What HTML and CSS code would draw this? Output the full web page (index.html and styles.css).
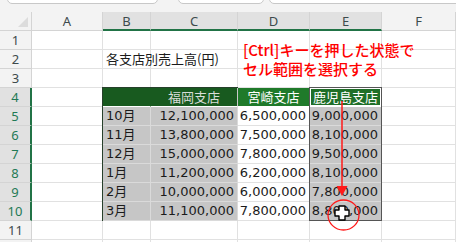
FILE: index.html
```html
<!DOCTYPE html>
<html lang="ja">
<head>
<meta charset="utf-8">
<link rel="stylesheet" href="styles.css">
</head>
<body>
<div class="chrome">
  <div class="box b1"></div>
  <div class="box b2"></div>
  <div class="box b3"></div>
</div>
<div class="sheet">
  <div class="c corner"><span class="tri"></span></div>
  <div class="c ch">A</div>
  <div class="c ch sel">B</div>
  <div class="c ch sel">C</div>
  <div class="c ch sel">D</div>
  <div class="c ch sel">E</div>
  <div class="c ch">F</div>

  <div class="c rh">1</div><div class="c"></div><div class="c"></div><div class="c"></div><div class="c"></div><div class="c"></div><div class="c"></div>
  <div class="c rh">2</div><div class="c"></div><div class="c title"><span>各支店別売上高(円)</span></div><div class="c"></div><div class="c"></div><div class="c"></div><div class="c"></div>
  <div class="c rh">3</div><div class="c"></div><div class="c"></div><div class="c"></div><div class="c"></div><div class="c"></div><div class="c"></div>

  <div class="c rh sel">4</div><div class="c"></div>
  <div class="c hd dim"></div><div class="c hd dim">福岡支店</div><div class="c hd">宮崎支店</div><div class="c hd act">鹿児島支店</div><div class="c"></div>

  <div class="c rh sel">5</div><div class="c"></div>
  <div class="c m s">10月</div><div class="c n s">12,100,000</div><div class="c n">6,500,000</div><div class="c n s">9,000,000</div><div class="c"></div>
  <div class="c rh sel">6</div><div class="c"></div>
  <div class="c m s">11月</div><div class="c n s">13,800,000</div><div class="c n">7,500,000</div><div class="c n s">8,100,000</div><div class="c"></div>
  <div class="c rh sel">7</div><div class="c"></div>
  <div class="c m s">12月</div><div class="c n s">15,000,000</div><div class="c n">7,800,000</div><div class="c n s">9,500,000</div><div class="c"></div>
  <div class="c rh sel">8</div><div class="c"></div>
  <div class="c m s">1月</div><div class="c n s">11,200,000</div><div class="c n">6,200,000</div><div class="c n s">8,100,000</div><div class="c"></div>
  <div class="c rh sel">9</div><div class="c"></div>
  <div class="c m s">2月</div><div class="c n s">10,000,000</div><div class="c n">6,000,000</div><div class="c n s">7,800,000</div><div class="c"></div>
  <div class="c rh sel">10</div><div class="c"></div>
  <div class="c m s">3月</div><div class="c n s">11,100,000</div><div class="c n">7,800,000</div><div class="c n s">8,800,000</div><div class="c"></div>

  <div class="c rh">11</div><div class="c"></div><div class="c"></div><div class="c"></div><div class="c"></div><div class="c"></div><div class="c"></div>
  <div class="c rh"></div><div class="c"></div><div class="c"></div><div class="c"></div><div class="c"></div><div class="c"></div><div class="c"></div>

  <div class="rng rng1"></div>
  <div class="rng rng2"></div>
</div>

<div class="note">[Ctrl]キーを押した状態で<br>セル範囲を選択する</div>

<svg class="overlay" width="456" height="242" viewBox="0 0 456 242">
  <line x1="342" y1="101" x2="342" y2="188" stroke="#ff1a1a" stroke-width="1.5"/>
  <polygon points="336.5,186 347.5,186 342,196" fill="#ff1a1a"/>
  <ellipse cx="343.5" cy="215" rx="15.5" ry="15" fill="none" stroke="#ff1a1a" stroke-width="1.3"/>
  <path d="M339 206h6v4h4v6h-4v4h-6v-4h-4v-6h4z" fill="#fff" stroke="#000" stroke-width="1.4" stroke-linejoin="round"/>
</svg>
</body>
</html>
```
FILE: styles.css
```css
html, body {
  margin: 0;
  padding: 0;
}
body {
  width: 456px;
  height: 242px;
  overflow: hidden;
  background: #fff;
  position: relative;
  font-family: "Noto Sans", "Noto Sans CJK JP", sans-serif;
}
.chrome {
  height: 12px;
  background: #f3f3f3;
  display: flex;
  align-items: flex-start;
  box-sizing: border-box;
}
.box {
  height: 14px;
  margin-top: -10px;
  background: #fff;
  border: 1px solid #c8c8c8;
  border-radius: 5px;
  box-sizing: border-box;
}
.b1 { margin-left: 7px; width: 151px; }
.b2 { margin-left: 20px; width: 86px; }
.b3 { margin-left: 5px; flex: 1; margin-right: -6px; }

.sheet {
  display: grid;
  grid-template-columns: 32px 71px 48px 87px 72px 72px 1fr;
  grid-auto-rows: 19px;
  position: relative;
}
.c {
  box-sizing: border-box;
  border-right: 1px solid #e1e1e1;
  border-bottom: 1px solid #e1e1e1;
  font-size: 13px;
  line-height: 18px;
  white-space: nowrap;
  color: #1b1b1b;
}
.corner {
  background: #f3f3f3;
  border-color: #d4d4d4;
  position: relative;
}
.tri {
  position: absolute;
  right: 3px;
  bottom: 3px;
  width: 0;
  height: 0;
  border-left: 10px solid transparent;
  border-bottom: 10px solid #dcdcdc;
}
.ch {
  background: #f3f3f3;
  border-color: #d4d4d4;
  text-align: center;
  color: #3d4a4c;
  font-size: 13px;
  line-height: 18px;
}
.ch.sel {
  background: #e1e1e1;
  border-bottom: 2px solid #217346;
}
.rh {
  background: #f3f3f3;
  border-color: #d4d4d4;
  text-align: center;
  color: #3d4a4c;
  font-size: 13px;
  line-height: 19px;
}
.rh.sel {
  background: #e1e1e1;
  border-right: 2px solid #217346;
  color: #1f7a55;
}
.title {
  overflow: visible;
  position: relative;
  z-index: 1;
  padding-left: 3px;
  font-family: "Noto Sans CJK JP", sans-serif;
}
.hd {
  background: #1f7a2a;
  color: #fff;
  text-align: center;
  font-family: "Noto Sans CJK JP", sans-serif;
  border-color: #fff;
}
.hd.dim {
  background: #185a1f;
  color: #d8ddd8;
  border-right-color: #185a1f;
}
.hd.dim + .hd.dim {
  border-right-color: #c8c8c8;
}
.hd.act {
  background: #1f6f28;
  box-shadow: inset 0 0 0 1px #fff;
}
.s {
  background: #c6c6c6;
  border-color: #dadada;
}
.m {
  padding-left: 3px;
  font-family: "DejaVu Sans", "Noto Sans CJK JP", sans-serif;
}
.n {
  text-align: right;
  padding-right: 3px;
  font-family: "DejaVu Sans", sans-serif;
}
.rng {
  pointer-events: none;
  box-sizing: border-box;
  position: absolute;
  top: -1px;
  left: -1px;
  right: 0;
  bottom: 0;
}
.rng1 {
  grid-column: 3 / 5;
  grid-row: 5 / 12;
  border-left: 1px solid #27402b;
  border-top: 1px solid #27402b;
}
.rng2 {
  grid-column: 6 / 7;
  grid-row: 5 / 12;
  border: 1px solid #555;
}
.note {
  position: absolute;
  left: 243px;
  top: 40px;
  font-family: "Noto Sans CJK JP", sans-serif;
  font-size: 15px;
  font-weight: 500;
  line-height: 19px;
  color: #ff0000;
  white-space: nowrap;
}
.overlay {
  position: absolute;
  left: 0;
  top: 0;
  pointer-events: none;
}
```
